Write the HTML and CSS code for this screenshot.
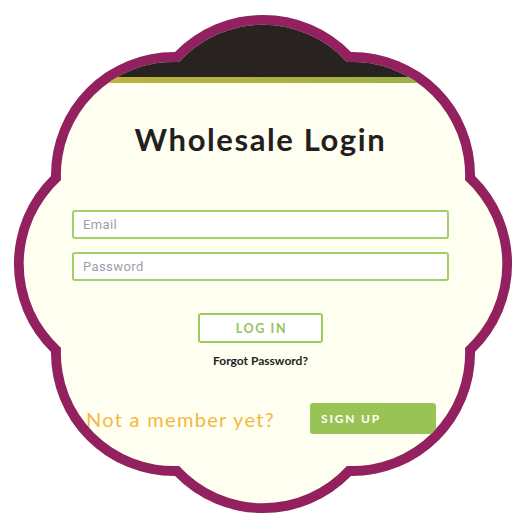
FILE: index.html
```html
<!DOCTYPE html>
<html lang="en">
<head>
<meta charset="utf-8">
<title>Wholesale Login</title>
<link rel="stylesheet" href="styles.css">
</head>
<body>
<div class="frame">
  <div class="panel">
    <div class="band"></div>
    <div class="stripe"></div>
    <div class="content">
      <h1 class="title">Wholesale Login</h1>
      <form class="form">
        <input class="field" type="email" placeholder="Email">
        <input class="field" type="password" placeholder="Password">
        <button class="login" type="button">LOG IN</button>
        <a class="forgot" href="#">Forgot Password?</a>
      </form>
      <div class="signup-row">
        <span class="member">Not a member yet?</span>
        <button class="signup" type="button">SIGN UP</button>
      </div>
    </div>
  </div>
</div>
</body>
</html>
```
FILE: styles.css
```css
html, body {
  margin: 0;
  padding: 0;
  background: #ffffff;
}
.frame {
  width: 531px;
  height: 531px;
  background: #93215f;
  clip-path: path("M 175 52 A 123 123 0 0 1 351 52 A 123 123 0 0 1 475 176 A 123 123 0 0 1 475 352 A 123 123 0 0 1 351 476 A 123 123 0 0 1 175 476 A 123 123 0 0 1 51 352 A 123 123 0 0 1 51 176 A 123 123 0 0 1 175 52 Z");
}
.panel {
  width: 531px;
  height: 531px;
  background: #fefef1;
  display: flex;
  flex-direction: column;
  clip-path: path("M 179.1 62 A 113 113 0 0 1 346.9 62 A 113 113 0 0 1 465 180.1 A 113 113 0 0 1 465 347.9 A 113 113 0 0 1 346.9 466 A 113 113 0 0 1 179.1 466 A 113 113 0 0 1 61 347.9 A 113 113 0 0 1 61 180.1 A 113 113 0 0 1 179.1 62 Z");
}
.band {
  height: 77px;
  background: #282220;
  flex: none;
}
.stripe {
  height: 6px;
  background: linear-gradient(90deg, #c6b43e 0%, #aab142 55%, #8db24a 100%);
  flex: none;
}
.content {
  width: 377px;
  margin-left: 72px;
  display: flex;
  flex-direction: column;
}
.title {
  margin: 37px 0 0;
  font-family: Lato, "Liberation Sans", sans-serif;
  font-weight: 700;
  font-size: 31px;
  line-height: 38px;
  letter-spacing: 1.6px;
  color: #231f1e;
  text-align: center;
}
.form {
  margin: 52px 0 0;
  display: flex;
  flex-direction: column;
  align-items: center;
}
.field {
  display: block;
  width: 100%;
  height: 29px;
  box-sizing: border-box;
  margin: 0 0 13px;
  padding: 0 9px;
  border: 2px solid #a2cf66;
  border-radius: 3px;
  background: #ffffff;
  font-family: Roboto, "Liberation Sans", sans-serif;
  font-size: 13px;
  letter-spacing: 0.4px;
  color: #333;
  outline: none;
}
.field::placeholder {
  color: #9b9fac;
}
.login {
  margin-top: 19px;
  width: 125px;
  height: 30px;
  box-sizing: border-box;
  border: 2px solid #9ccb5e;
  border-radius: 3px;
  background: #ffffff;
  color: #94c460;
  font-family: Lato, "Liberation Sans", sans-serif;
  font-weight: 700;
  font-size: 12.5px;
  letter-spacing: 1.6px;
  padding: 0 0 0 2px;
}
.forgot {
  margin-top: 10px;
  font-family: Lato, "Liberation Sans", sans-serif;
  font-weight: 700;
  font-size: 12px;
  line-height: 15px;
  color: #231f1e;
  text-decoration: none;
}
.signup-row {
  margin-top: 35px;
  padding: 0 13px 0 14px;
  display: flex;
  justify-content: space-between;
  align-items: center;
}
.member {
  font-family: Lato, "Liberation Sans", sans-serif;
  font-weight: 400;
  font-size: 20px;
  letter-spacing: 1.3px;
  color: #f4b843;
}
.signup {
  width: 126px;
  height: 31px;
  border: none;
  border-radius: 3px;
  background: #99c455;
  color: #ffffff;
  text-align: left;
  padding: 0 0 0 11px;
  font-family: Lato, "Liberation Sans", sans-serif;
  font-weight: 700;
  font-size: 12px;
  letter-spacing: 1.8px;
}
```
